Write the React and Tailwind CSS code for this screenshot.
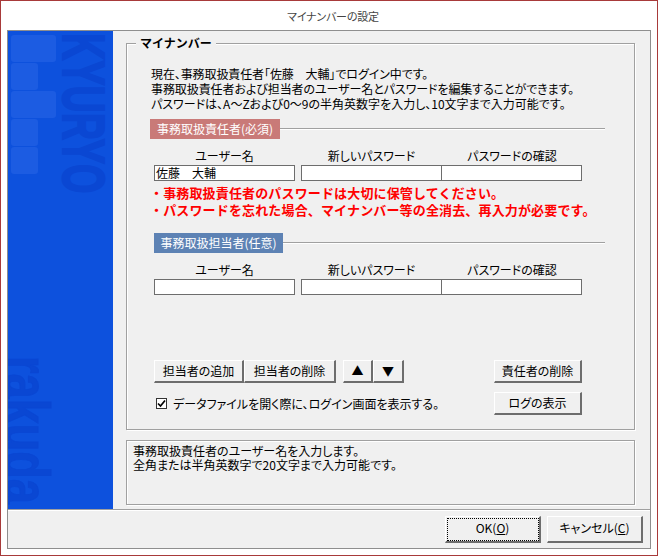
const Field = ({ value = '', joined }) => (
  <div className={`h-[16px] w-[141px] border border-[#6d6d6d] bg-white pl-[1px] text-[12px] leading-[14px] text-black ${joined ? '-ml-px' : ''}`}>
    {value}
  </div>
);

const Labels = () => (
  <div className="flex text-center text-[12px] leading-[14px] text-black">
    <div className="w-[141px]">ユーザー名</div>
    <div className="ml-[6px] w-[141px]">新しいパスワード</div>
    <div className="w-[140px]">パスワードの確認</div>
  </div>
);

const Fields = ({ name }) => (
  <div className="mt-[2px] flex">
    <Field value={name} />
    <div className="ml-[6px]" />
    <Field />
    <Field joined />
  </div>
);

const SectionTitle = ({ children, color, width }) => (
  <div className="flex items-center">
    <div className={`flex h-[20px] items-center justify-center text-[12px] text-white ${color} ${width}`}>{children}</div>
    <div className="h-[2px] flex-1 border-t border-[#a0a0a0] bg-white" />
  </div>
);

const Btn = ({ children, className = '' }) => (
  <div className={`flex h-[23px] items-center justify-center border-t border-l border-white border-r-2 border-b-2 border-r-[#6d6d6d] border-b-[#6d6d6d] bg-[#f0f0f0] pb-[1px] text-[12px] text-black ${className}`}>
    {children}
  </div>
);

const Tile = ({ w }) => <div className={`h-[27px] ${w} rounded-[3px] bg-[#1c5ce2]`} />;

const SidePanel = () => (
  <div className="relative h-[478px] w-[105px] overflow-hidden bg-[#0d51dd]">
    <div className="absolute left-[3px] top-[4px] flex flex-col gap-px">
      <Tile w="w-[45px]" />
      <Tile w="w-[27px]" />
      <Tile w="w-[45px]" />
      <Tile w="w-[27px]" />
      <Tile w="w-[27px]" />
    </div>
    <div className="absolute left-[105px] top-[2px] origin-top-left whitespace-nowrap font-['Liberation_Sans',sans-serif] text-[60px] font-bold leading-none text-[#0a47d3] [-webkit-text-stroke:2px_#0a47d3] [transform:rotate(90deg)_scaleX(0.63)]">
      KYURYO
    </div>
    <div className="absolute left-[50px] top-[325px] origin-top-left whitespace-nowrap font-['Liberation_Sans',sans-serif] text-[64px] font-bold leading-none text-[#0a47d3] [-webkit-text-stroke:1px_#0a47d3] [transform:rotate(90deg)_scaleX(0.705)]">
      rakuda
    </div>
  </div>
);

export default function App() {
  return (
    <div className="flex h-[556px] w-[658px] flex-col overflow-hidden border border-[#a83a3a] bg-white font-['Noto_Sans_CJK_JP','Noto_Sans',sans-serif] [font-feature-settings:'palt']">
      <div className="flex h-[29px] items-center justify-center pl-[8px] pt-[2px] text-[11px] tracking-[-0.2px] text-[#444]">マイナンバーの設定</div>
      <div className="mx-[6px] mb-[6px] flex flex-1 flex-col border border-[#8e8e8e] bg-[#f0f0f0]">
        <div className="flex">
          <SidePanel />
          <div className="flex-1 pl-[13px] pr-[15px] pt-[12px]">
            <div className="relative h-[387px] border border-[#a0a0a0] pl-[24px] pr-[29px] shadow-[inset_1px_1px_0_#fff,1px_1px_0_#fff]">
              <div className="absolute left-[9px] top-[-8px] bg-[#f0f0f0] px-[4px] text-[12px] font-bold leading-[14px] text-black [font-feature-settings:normal]">マイナンバー</div>
              <div className="mt-[22px] text-[12px] leading-[15px] text-black">
                <div className="tracking-[-0.1px]">現在、事務取扱責任者「佐藤　大輔」でログイン中です。</div>
                <div className="tracking-[-0.08px]">事務取扱責任者および担当者のユーザー名とパスワードを編集することができます。</div>
                <div>パスワードは、A～Zおよび0～9の半角英数字を入力し、10文字まで入力可能です。</div>
              </div>
              <div className="-ml-[1px] mt-[8px]">
                <SectionTitle color="bg-[#c97a78]" width="w-[130px]">事務取扱責任者(必須)</SectionTitle>
              </div>
              <div className="ml-[3px] mt-[10px] w-[428px]">
                <Labels />
                <Fields name="佐藤　大輔" />
              </div>
              <div className="-ml-[1px] mt-[3px] text-[13px] font-bold leading-[17px] tracking-[0.15px] text-[#ff0000] [font-feature-settings:normal]">
                <div>・事務取扱責任者のパスワードは大切に保管してください。</div>
                <div>・パスワードを忘れた場合、マイナンバー等の全消去、再入力が必要です。</div>
              </div>
              <div className="ml-[3px] mt-[15px]">
                <SectionTitle color="bg-[#5d82b4]" width="w-[129px]">事務取扱担当者(任意)</SectionTitle>
              </div>
              <div className="ml-[3px] mt-[10px] w-[428px]">
                <Labels />
                <Fields />
              </div>
              <div className="ml-[3px] mt-[65px] flex w-[428px] items-start">
                <Btn className="w-[90px]">担当者の追加</Btn>
                <Btn className="w-[92px]">担当者の削除</Btn>
                <Btn className="ml-[7px] w-[30px] text-[11px]">▲</Btn>
                <Btn className="w-[31px] text-[11px]">▼</Btn>
                <Btn className="ml-auto w-[88px]">責任者の削除</Btn>
              </div>
              <div className="ml-[3px] mt-[9px] flex w-[428px] items-center">
                <div className="ml-[2px] flex h-[11px] w-[11px] items-center justify-center border border-[#333] bg-white">
                  <svg width="9" height="9" viewBox="0 0 9 9"><path d="M1 4.5 L3.5 7 L8 1.5" fill="none" stroke="#000" strokeWidth="1.7" /></svg>
                </div>
                <div className="ml-[6px] text-[12px] text-black">データファイルを開く際に、ログイン画面を表示する。</div>
                <Btn className="ml-auto w-[88px]">ログの表示</Btn>
              </div>
            </div>
            <div className="mt-[10px] h-[65px] border border-[#a0a0a0] px-[6px] pt-[3px] text-[12px] leading-[14px] text-black shadow-[inset_1px_1px_0_#fff,1px_1px_0_#fff]">
              <div>事務取扱責任者のユーザー名を入力します。</div>
              <div>全角または半角英数字で20文字まで入力可能です。</div>
            </div>
          </div>
        </div>
        <div className="h-[2px] border-t border-[#a0a0a0] bg-white" />
        <div className="flex flex-1 items-center justify-end pb-[1px] pr-[7px]">
          <Btn className="h-[27px] w-[96px] outline-1 -outline-offset-3 outline-dotted outline-black">OK(<span className="underline">O</span>)</Btn>
          <Btn className="ml-[6px] h-[27px] w-[96px]">キャンセル(<span className="underline">C</span>)</Btn>
        </div>
      </div>
    </div>
  );
}
